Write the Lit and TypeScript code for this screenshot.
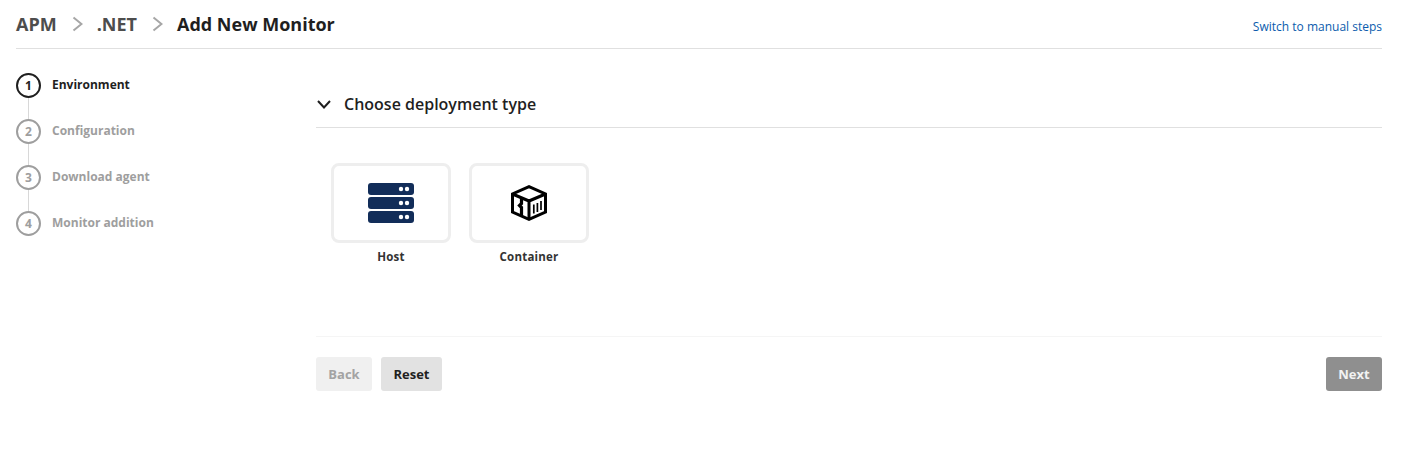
import { LitElement, html, css, svg } from "lit";
import { customElement } from "lit/decorators.js";

const STEPS = ["Environment", "Configuration", "Download agent", "Monitor addition"];

const hostIcon = svg`
  <svg width="46" height="40" viewBox="0 0 46 40">
    ${[0, 14, 28].map(
      (y) => svg`
        <rect x="0" y="${y}" width="46" height="12" rx="3" fill="#122d59"></rect>
        <circle cx="33" cy="${y + 6}" r="2.2" fill="#fff"></circle>
        <circle cx="39" cy="${y + 6}" r="2.2" fill="#fff"></circle>
      `
    )}
  </svg>
`;

const containerIcon = svg`
  <svg width="36" height="36" viewBox="0 0 36 36" fill="none" stroke="#000" stroke-width="3" stroke-linejoin="miter">
    <path d="M18 1.7 34.5 9 V27 L18 34.3 1.5 27 V9 Z"></path>
    <path d="M1.5 9 18 16 34.5 9 M18 16 V34"></path>
    <path d="M10.5 13 V18.5 L8.5 20.5 L10.5 22.5 V31" stroke-width="3.2"></path>
    <path d="M22.8 19.5 V28.5 M26.4 18 V27 M30 16 V25" stroke-width="1.7"></path>
  </svg>
`;

@customElement("app-root")
export class AppRoot extends LitElement {
  static styles = css`
    :host {
      display: block;
      font-family: "Open Sans", "Noto Sans", sans-serif;
      color: #1f1f1f;
      background: #fff;
      padding: 0 20px 0 16px;
    }

    .header {
      height: 48px;
      display: flex;
      align-items: center;
      justify-content: space-between;
      border-bottom: 1px solid #e0e0e0;
    }

    .crumbs {
      display: flex;
      align-items: center;
      font-size: 18px;
      font-weight: 700;
      color: #4d4d4d;
    }

    .crumbs svg {
      margin: 0 14px;
    }

    .crumbs .current {
      color: #1f1f1f;
    }

    .switch {
      font-size: 12px;
      color: #0b5cad;
      text-decoration: none;
      margin-top: 5px;
    }

    .body {
      display: flex;
    }

    .stepper {
      width: 300px;
      padding-top: 24px;
      flex: none;
    }

    .step {
      display: flex;
      gap: 11px;
      height: 46px;
      color: #9e9e9e;
    }

    .rail {
      display: flex;
      flex-direction: column;
      align-items: center;
      width: 25px;
    }

    .num {
      box-sizing: border-box;
      width: 25px;
      height: 25px;
      flex: none;
      border: 2px solid #9e9e9e;
      border-radius: 50%;
      display: flex;
      align-items: center;
      justify-content: center;
      font-size: 12px;
      font-weight: 700;
    }

    .line {
      width: 1px;
      flex: 1;
      background: #d8d8d8;
    }

    .step-label {
      font-size: 12px;
      font-weight: 700;
      line-height: 24px;
    }

    .step.active {
      color: #1f1f1f;
    }

    .step.active .num {
      border-color: #1f1f1f;
    }

    .main {
      flex: 1;
      min-width: 0;
    }

    .section-head {
      box-sizing: border-box;
      height: 79px;
      padding-top: 31px;
      display: flex;
      align-items: flex-start;
      gap: 12px;
      border-bottom: 1px solid #e0e0e0;
      font-size: 16px;
      font-weight: 600;
      line-height: 48px;
    }

    .section-head svg {
      margin-top: 19px;
    }

    .cards {
      display: flex;
      gap: 18px;
      padding: 35px 0 0 15px;
      height: 209px;
      box-sizing: border-box;
      border-bottom: 1px solid #f5f5f5;
      margin-bottom: 20px;
    }

    .option {
      width: 120px;
      text-align: center;
      font-size: 11.5px;
      font-weight: 700;
      letter-spacing: 0.2px;
      color: #333;
    }

    .card {
      box-sizing: border-box;
      height: 80px;
      border: 3px solid #eeeeee;
      border-radius: 8px;
      display: flex;
      align-items: center;
      justify-content: center;
      margin-bottom: 6px;
    }

    .actions {
      display: flex;
      gap: 9px;
    }

    .btn {
      height: 34px;
      border-radius: 3px;
      font-size: 13px;
      font-weight: 700;
      display: flex;
      align-items: center;
      justify-content: center;
    }

    .back {
      width: 56px;
      background: #f0f0f0;
      color: #a3a3a3;
    }

    .reset {
      width: 61px;
      background: #e2e2e2;
      color: #1f1f1f;
    }

    .next {
      width: 56px;
      margin-left: auto;
      background: #8f8f8f;
      color: #f2f2f2;
    }
  `;

  private chevron() {
    return html`<svg width="12" height="18" viewBox="0 0 12 18" fill="none" stroke="#a6a6a6" stroke-width="2">
      <path d="M2.5 2.5l8 6.5-8 6.5"></path>
    </svg>`;
  }

  render() {
    return html`
      <div class="header">
        <div class="crumbs">
          <span>APM</span>${this.chevron()}<span>.NET</span>${this.chevron()}
          <span class="current">Add New Monitor</span>
        </div>
        <a class="switch" href="#">Switch to manual steps</a>
      </div>
      <div class="body">
        <div class="stepper">
          ${STEPS.map(
            (label, i) => html`
              <div class="step ${i === 0 ? "active" : ""}">
                <div class="rail">
                  <div class="num">${i + 1}</div>
                  ${i < STEPS.length - 1 ? html`<div class="line"></div>` : ""}
                </div>
                <div class="step-label">${label}</div>
              </div>
            `
          )}
        </div>
        <div class="main">
          <div class="section-head">
            <svg width="16" height="12" viewBox="0 0 16 12" fill="none" stroke="#1f1f1f" stroke-width="2">
              <path d="M2 2l6 6.5L14 2"></path>
            </svg>
            <span>Choose deployment type</span>
          </div>
          <div class="cards">
            <div class="option">
              <div class="card">${hostIcon}</div>
              Host
            </div>
            <div class="option">
              <div class="card">${containerIcon}</div>
              Container
            </div>
          </div>
          <div class="actions">
            <div class="btn back">Back</div>
            <div class="btn reset">Reset</div>
            <div class="btn next">Next</div>
          </div>
        </div>
      </div>
    `;
  }
}
